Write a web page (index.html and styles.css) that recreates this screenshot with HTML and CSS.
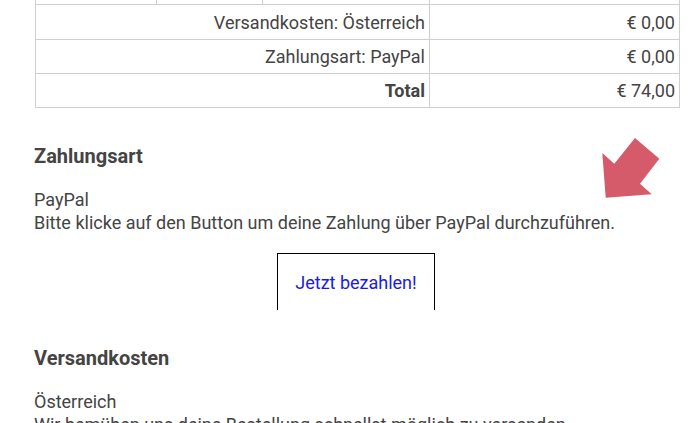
FILE: index.html
```html
<!DOCTYPE html>
<html lang="de">
<head>
<meta charset="utf-8">
<title>Bestellung</title>
<link rel="stylesheet" href="styles.css">
</head>
<body>
<div class="page">
  <table class="cart">
    <colgroup>
      <col class="c1"><col class="c2"><col class="c3"><col class="c4">
    </colgroup>
    <tr class="row"><td></td><td></td><td></td><td></td></tr>
    <tr class="row"><td colspan="3" class="label">Versandkosten: Österreich</td><td class="value">€ 0,00</td></tr>
    <tr class="row"><td colspan="3" class="label">Zahlungsart: PayPal</td><td class="value">€ 0,00</td></tr>
    <tr class="row"><td colspan="3" class="label strong">Total</td><td class="value">€ 74,00</td></tr>
  </table>

  <section class="block">
    <h2 class="block-title">Zahlungsart</h2>
    <p class="block-text">PayPal<br>Bitte klicke auf den Button um deine Zahlung über PayPal durchzuführen.</p>
    <div class="pay-wrap">
      <a class="pay-btn" href="#">Jetzt bezahlen!</a>
    </div>
  </section>

  <section class="block">
    <h2 class="block-title">Versandkosten</h2>
    <p class="block-text">Österreich<br>Wir bemühen uns deine Bestellung schnellst möglich zu versenden.</p>
  </section>

  <svg class="arrow" width="70" height="70" viewBox="0 0 70 70" aria-hidden="true">
    <polygon points="5.7,65.7 2.3,21 14.3,31.7 35,6 59.3,26.7 40,51.7 51.7,62.3" fill="#d65b6a"/>
  </svg>
</div>
</body>
</html>
```

FILE: styles.css
```css
html, body {
  margin: 0;
  padding: 0;
  background: #fff;
}
body {
  font-family: "Roboto", "Liberation Sans", sans-serif;
  color: #444;
  font-size: 18px;
  line-height: 23px;
}
.page {
  position: relative;
  padding: 0 0 0 34px;
  margin-top: -30px;
}
.cart {
  border-collapse: collapse;
  margin-left: 1px;
  width: 644px;
  table-layout: fixed;
}
.c1 { width: 121px; }
.c2 { width: 106px; }
.c3 { width: 167px; }
.c4 { width: 250px; }
.cart tr { height: 34px; }
.cart td {
  border: 1px solid #cfcfcf;
  padding: 0 4px;
  vertical-align: middle;
  font-size: 18px;
}
.cart tr:nth-child(2) { height: 35px; }
.label, .value { text-align: right; }
.strong { font-weight: 700; }
.block { margin-top: 36px; }
.block-title {
  margin: 0;
  font-size: 20px;
  line-height: 24px;
  font-weight: 700;
  color: #444;
}
.block-text {
  margin: 20px 0 0;
}
.pay-wrap {
  display: flex;
  justify-content: center;
  width: 644px;
  margin-top: 19px;
}
.pay-btn {
  display: block;
  width: 158px;
  box-sizing: border-box;
  border: 1px solid #000;
  border-bottom: none;
  padding: 17px 0 16px;
  text-align: center;
  color: #1a1ae6;
  text-decoration: none;
  font-size: 18px;
  line-height: 23px;
}
.arrow {
  position: absolute;
  left: 600px;
  top: 162px;
}
```
